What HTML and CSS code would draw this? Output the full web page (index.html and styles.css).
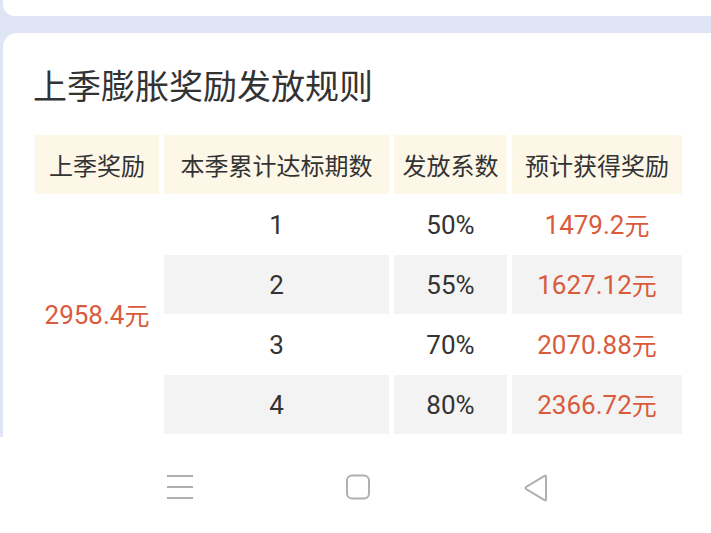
FILE: index.html
```html
<!DOCTYPE html>
<html lang="zh">
<head>
<meta charset="utf-8">
<title>上季膨胀奖励发放规则</title>
<link rel="stylesheet" href="styles.css">
</head>
<body>
<div class="top-card"></div>
<section class="card">
  <h1 class="title">上季膨胀奖励发放规则</h1>
  <div class="table">
    <div class="cell head">上季奖励</div>
    <div class="cell head">本季累计达标期数</div>
    <div class="cell head">发放系数</div>
    <div class="cell head">预计获得奖励</div>

    <div class="cell span red">2958.4<span class="yuan">元</span></div>
    <div class="cell">1</div>
    <div class="cell">50%</div>
    <div class="cell red">1479.2<span class="yuan">元</span></div>

    <div class="cell alt">2</div>
    <div class="cell alt">55%</div>
    <div class="cell alt red">1627.12<span class="yuan">元</span></div>

    <div class="cell">3</div>
    <div class="cell">70%</div>
    <div class="cell red">2070.88<span class="yuan">元</span></div>

    <div class="cell alt">4</div>
    <div class="cell alt">80%</div>
    <div class="cell alt red">2366.72<span class="yuan">元</span></div>
  </div>
</section>
<nav class="navbar">
  <svg class="nav-icon" width="26" height="26" viewBox="0 0 26 26">
    <path d="M0 2h26M0 13h26M0 24h26" stroke="#b0b0b0" stroke-width="2" fill="none"/>
  </svg>
  <svg class="nav-icon" width="26" height="26" viewBox="0 0 26 26">
    <rect x="2" y="1.5" width="22" height="23" rx="5" ry="5" stroke="#b0b0b0" stroke-width="2" fill="none"/>
  </svg>
  <svg class="nav-icon" width="26" height="28" viewBox="0 0 26 28">
    <path d="M23 2.5 L23 25.5 Q23 27 21.6 26.2 L3.2 15.2 Q1.8 14 3.2 12.8 L21.6 1.8 Q23 1 23 2.5 Z" stroke="#b0b0b0" stroke-width="2" fill="none" stroke-linejoin="round"/>
  </svg>
</nav>
</body>
</html>
```

FILE: styles.css
```css
html, body {
  margin: 0;
  padding: 0;
}

body {
  width: 711px;
  height: 533px;
  overflow: hidden;
  background: #dfe5f4;
  font-family: Roboto, "Noto Sans CJK SC", sans-serif;
  color: #333333;
}

.top-card {
  height: 16px;
  margin-left: 3px;
  margin-right: -14px;
  background: #ffffff;
  border-radius: 0 0 12px 12px;
}

.card {
  margin-top: 17px;
  margin-left: 3px;
  margin-right: -14px;
  height: 404px;
  box-sizing: border-box;
  padding: 34px 0 0 30px;
  background: #ffffff;
  border-radius: 14px 14px 0 0;
}

.title {
  margin: 0;
  font-family: "Noto Sans CJK SC", sans-serif;
  font-size: 34px;
  line-height: 36px;
  font-weight: 400;
  color: #333333;
}

.table {
  margin-top: 32px;
  margin-left: 2px;
  display: grid;
  grid-template-columns: 124px 225px 113px 170px;
  grid-auto-rows: 59px;
  column-gap: 5px;
  row-gap: 1px;
}

.cell {
  display: flex;
  align-items: center;
  justify-content: center;
  font-size: 26px;
  color: #333333;
  background: #ffffff;
}

.yuan {
  font-family: "Noto Sans CJK SC", sans-serif;
  font-size: 25px;
  position: relative;
  top: -1px;
}

.head {
  background: #fdf7e8;
  font-family: "Noto Sans CJK SC", sans-serif;
  font-size: 24px;
}

.span {
  grid-row: span 4;
}

.alt {
  background: #f3f3f3;
}

.red {
  color: #da5a3c;
}

.navbar {
  height: 96px;
  background: #ffffff;
  display: flex;
  align-items: flex-start;
  padding-left: 167px;
  padding-top: 37px;
  box-sizing: border-box;
  gap: 152px;
}

.nav-icon {
  display: block;
}
```
